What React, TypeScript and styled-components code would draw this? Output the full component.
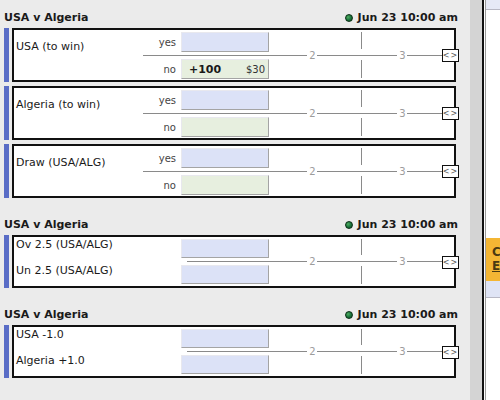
import styled, { createGlobalStyle } from "styled-components";

const GlobalStyle = createGlobalStyle`
  html, body {
    margin: 0;
    padding: 0;
  }
  body {
    background: #ebebeb;
    font-family: "DejaVu Sans", Verdana, sans-serif;
    font-size: 11px;
    color: #111;
  }
`;

type YesNo = { kind: "yesno"; name: string; no?: { odds: string; amount: string } };
type Pair = { kind: "pair"; names: [string, string] };
type Market = YesNo | Pair;

const groups: { title: string; start: string; markets: Market[] }[] = [
  {
    title: "USA v Algeria",
    start: "Jun 23 10:00 am",
    markets: [
      { kind: "yesno", name: "USA (to win)", no: { odds: "+100", amount: "$30" } },
      { kind: "yesno", name: "Algeria (to win)" },
      { kind: "yesno", name: "Draw (USA/ALG)" },
    ],
  },
  {
    title: "USA v Algeria",
    start: "Jun 23 10:00 am",
    markets: [{ kind: "pair", names: ["Ov 2.5 (USA/ALG)", "Un 2.5 (USA/ALG)"] }],
  },
  {
    title: "USA v Algeria",
    start: "Jun 23 10:00 am",
    markets: [{ kind: "pair", names: ["USA -1.0", "Algeria +1.0"] }],
  },
];

function Ladder({ h, y }: { h: number; y: number }) {
  const ly = y + 0.5;
  return (
    <svg width="185" height={h} viewBox={`0 0 185 ${h}`}>
      <g stroke="#8a8a8a" strokeWidth="1">
        <line x1="0" y1={ly} x2="38" y2={ly} />
        <line x1="48" y1={ly} x2="128" y2={ly} />
        <line x1="138" y1={ly} x2="175" y2={ly} />
        <line x1="92.5" y1="2" x2="92.5" y2={y - 6} />
        <line x1="92.5" y1={y + 5} x2="92.5" y2={h - 2} />
      </g>
      <text x="43.5" y={y + 4} fontSize="10" fill="#9c9c9c" textAnchor="middle" fontFamily="DejaVu Sans, sans-serif">
        2
      </text>
      <text x="133.5" y={y + 4} fontSize="10" fill="#9c9c9c" textAnchor="middle" fontFamily="DejaVu Sans, sans-serif">
        3
      </text>
    </svg>
  );
}

function MarketBox({ market }: { market: Market }) {
  if (market.kind === "yesno") {
    return (
      <Row>
        <Bar />
        <Box $h={54}>
          <Name>{market.name}</Name>
          <Book $w={126}>
            <Line $h={20}>
              <Side>yes</Side>
              <Cell $tone="back" />
            </Line>
            <Divider $inset={0} />
            <Line $h={20}>
              <Side>no</Side>
              <Cell $tone="lay">
                {market.no && (
                  <>
                    <Odds>{market.no.odds}</Odds>
                    <Amount>{market.no.amount}</Amount>
                  </>
                )}
              </Cell>
            </Line>
          </Book>
          <Chart>
            <Ladder h={50} y={25} />
          </Chart>
          <Toggle>&lt;&gt;</Toggle>
        </Box>
      </Row>
    );
  }
  return (
    <Row>
      <Bar />
      <Box $h={53}>
        <Book $w={255}>
          <Line $h={19}>
            <PairName>{market.names[0]}</PairName>
            <Cell $tone="back" />
          </Line>
          <Divider $inset={173} />
          <Line $h={19}>
            <PairName>{market.names[1]}</PairName>
            <Cell $tone="back" />
          </Line>
        </Book>
        <Chart>
          <Ladder h={49} y={24} />
        </Chart>
        <Toggle>&lt;&gt;</Toggle>
      </Box>
    </Row>
  );
}

export default function App() {
  return (
    <>
      <GlobalStyle />
      <Page>
        <Main>
          {groups.map((g, i) => (
            <Group key={i}>
              <Header>
                <span>{g.title}</span>
                <Start>
                  <LiveDot />
                  {g.start}
                </Start>
              </Header>
              <List>
                {g.markets.map((m, j) => (
                  <MarketBox key={j} market={m} />
                ))}
              </List>
            </Group>
          ))}
        </Main>
        <Side2>
          <Track />
          <Panel>
            <PanelInner>
              <TopStrip />
              <Promo>
                <PromoLine>C</PromoLine>
                <PromoLink>E</PromoLink>
              </Promo>
              <PromoFoot />
            </PanelInner>
          </Panel>
        </Side2>
      </Page>
    </>
  );
}

const Page = styled.div`
  display: flex;
  width: 500px;
  height: 400px;
  overflow: hidden;
`;

const Main = styled.main`
  width: 470px;
  flex-shrink: 0;
  box-sizing: border-box;
  padding: 7px 12px 0 4px;
  background: #ebebeb;
`;

const Group = styled.section`
  margin-bottom: 16px;
`;

const Header = styled.div`
  display: flex;
  justify-content: space-between;
  align-items: center;
  height: 21px;
  font-size: 11px;
  font-weight: bold;
  color: #1a1a1a;
`;

const Start = styled.span`
  display: flex;
  align-items: center;
  gap: 5px;
`;

const LiveDot = styled.span`
  width: 8px;
  height: 8px;
  border-radius: 50%;
  box-sizing: border-box;
  border: 1px solid #0a2e14;
  background: radial-gradient(circle at 35% 35%, #4fae62, #18703a 55%, #0e4a22);
`;

const List = styled.div`
  display: flex;
  flex-direction: column;
  gap: 4px;
`;

const Row = styled.div`
  display: flex;
  gap: 3px;
  margin-right: 2px;
`;

const Bar = styled.div`
  width: 5px;
  flex-shrink: 0;
  background: #5a6dc6;
`;

const Box = styled.div<{ $h: number }>`
  position: relative;
  flex: 1;
  display: flex;
  height: ${(p) => p.$h}px;
  box-sizing: border-box;
  border: 2px solid #111;
  background: #fff;
`;

const Name = styled.div`
  width: 129px;
  flex-shrink: 0;
  box-sizing: border-box;
  padding: 10px 0 0 2px;
  line-height: 13px;
  font-size: 11px;
  color: #1a1a1a;
`;

const Book = styled.div<{ $w: number }>`
  width: ${(p) => p.$w}px;
  flex-shrink: 0;
  display: flex;
  flex-direction: column;
  padding-top: 2px;
`;

const Line = styled.div<{ $h: number }>`
  display: flex;
  align-items: center;
  height: ${(p) => p.$h}px;
`;

const Side = styled.div`
  flex: 1;
  text-align: right;
  padding-right: 5px;
  font-size: 10px;
  color: #444;
`;

const PairName = styled.div`
  flex: 1;
  align-self: flex-start;
  margin-top: -1px;
  padding-left: 2px;
  line-height: 13px;
  font-size: 11px;
  color: #1a1a1a;
`;

const Cell = styled.div<{ $tone: "back" | "lay" }>`
  width: 88px;
  height: 100%;
  box-sizing: border-box;
  display: flex;
  align-items: center;
  justify-content: space-between;
  padding: 0 3px 0 7px;
  background: ${(p) => (p.$tone === "back" ? "#dce2f7" : "#e7efdf")};
  border-style: solid;
  border-width: 1px;
  border-color: #e8e8ee #a4a4a4 #a4a4a4 #e8e8ee;
`;

const Odds = styled.span`
  font-weight: bold;
  font-size: 11px;
  color: #1a1a1a;
`;

const Amount = styled.span`
  font-size: 10px;
  color: #333;
`;

const Divider = styled.div<{ $inset: number }>`
  margin: 3px 0 3px ${(p) => p.$inset}px;
  border-top: 1px solid #8a8a8a;
`;

const Chart = styled.div`
  flex: 1;
  display: flex;
`;

const Toggle = styled.div`
  position: absolute;
  right: -5px;
  top: 19px;
  width: 17px;
  height: 13px;
  box-sizing: border-box;
  border: 1px solid #111;
  background: #fff;
  display: flex;
  align-items: center;
  justify-content: center;
  font-size: 8px;
  letter-spacing: 1px;
  color: #555;
`;

const Side2 = styled.aside`
  flex: 1;
  display: flex;
`;

const Track = styled.div`
  width: 12px;
  background: #d4d4d4;
`;

const Panel = styled.div`
  flex: 1;
  display: flex;
  background: #fff;
  border-left: 2px solid #111;
  padding-left: 1px;
`;

const PanelInner = styled.div`
  flex: 1;
  display: flex;
  flex-direction: column;
  border-left: 1px solid #9a9a9a;
`;

const TopStrip = styled.div`
  height: 9px;
  background: #e6e9f6;
  border-bottom: 1px solid #b8b8c4;
`;

const Promo = styled.div`
  margin-top: 228px;
  height: 43px;
  box-sizing: border-box;
  padding: 7px 0 0 6px;
  background: #f4b634;
  font-weight: bold;
  font-size: 12px;
  line-height: 14px;
  color: #4a3a12;
  white-space: nowrap;
`;

const PromoLine = styled.div``;

const PromoLink = styled.div`
  text-decoration: underline;
`;

const PromoFoot = styled.div`
  height: 16px;
  background: #dfe4f5;
  border-bottom: 1px solid #b8b8c4;
`;
